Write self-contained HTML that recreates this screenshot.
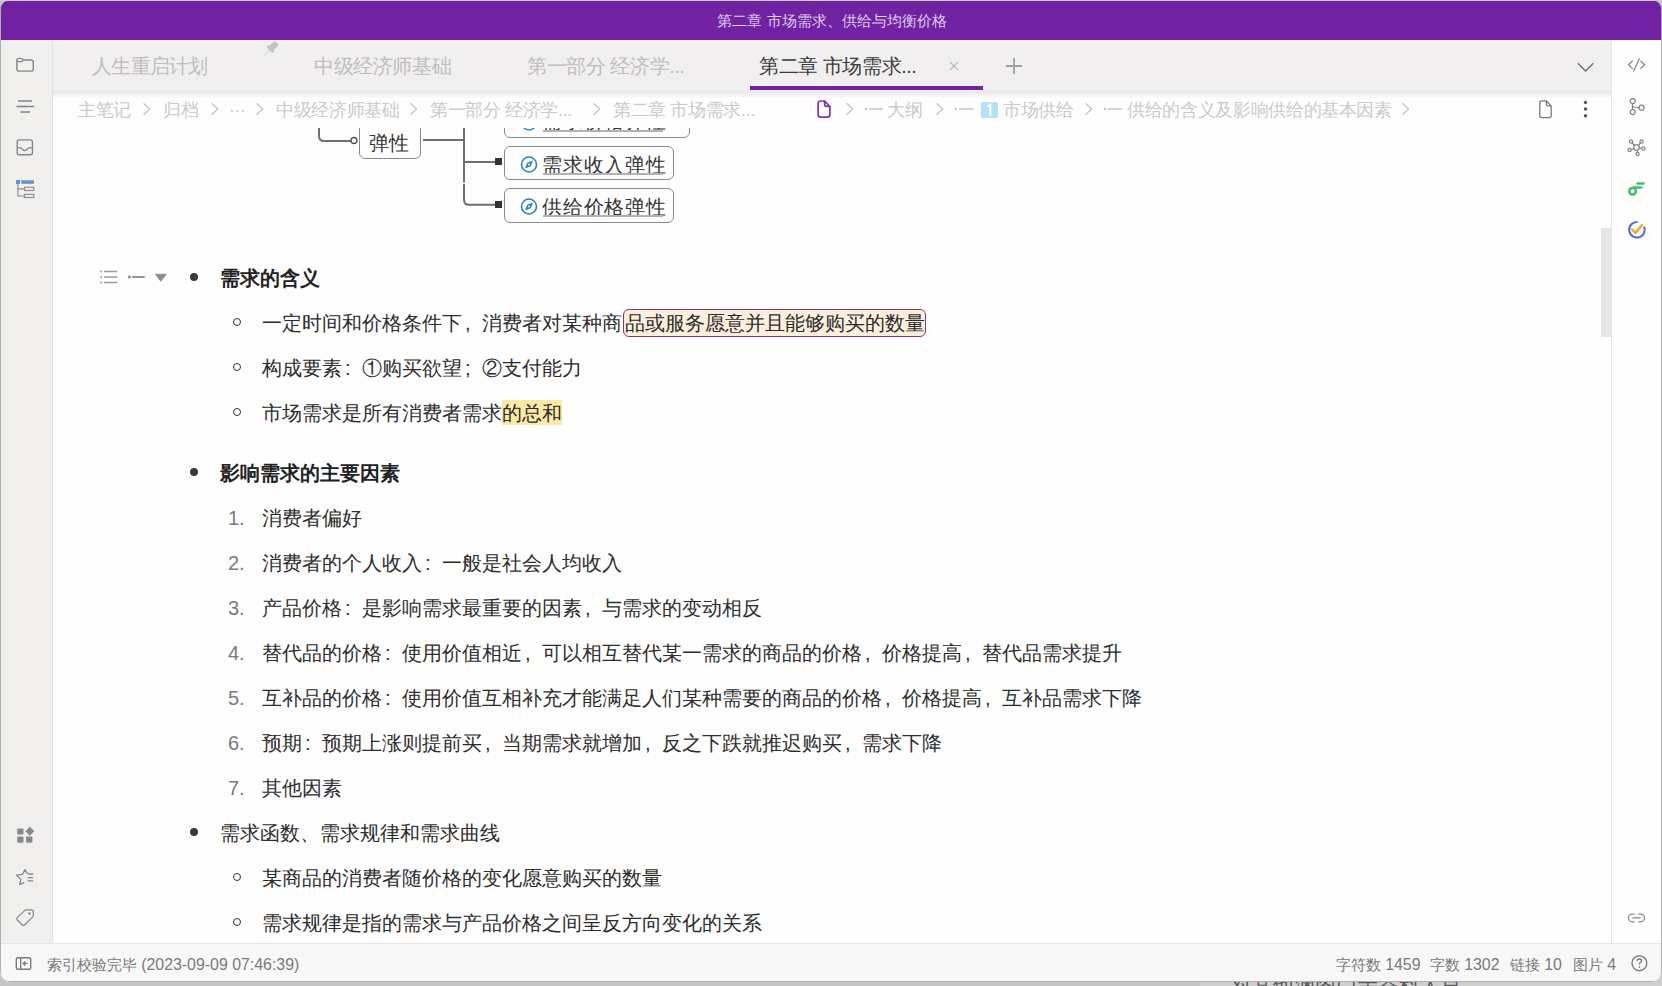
<!DOCTYPE html>
<html><head><meta charset="utf-8">
<style>
*{box-sizing:border-box}
html,body{margin:0;padding:0}
body{width:1662px;height:986px;overflow:hidden;position:relative;background:#c6c6c6;font-family:"Liberation Sans",sans-serif;color:#222}
#behind{position:absolute;left:1200px;top:978px;width:462px;height:8px;background:#cfcfcf}
#win{position:absolute;left:0;top:0;width:1662px;height:982px;border-radius:10px;overflow:hidden;background:#fefefe}
#frame{position:absolute;left:0;top:0;width:1662px;height:982px;border-radius:9px;border:1px solid #b0b0b0;border-top:none;pointer-events:none}
#title{position:absolute;left:0;top:0;width:1662px;height:40px;background:#7122a3;color:#ddcfec;font-size:15.2px;text-align:center;line-height:42px;padding-left:2px}
#ldock{position:absolute;left:0;top:40px;width:53px;height:904px;background:#f2f0ef;border-right:1px solid #e0e0dc}
#tabs{position:absolute;left:53px;top:40px;width:1558px;height:52px;background:#f1efef}
#tabshade{position:absolute;left:53px;top:91px;width:1558px;height:7px;background:linear-gradient(#e8e6e8,#fcfcfc)}
#rdock{position:absolute;left:1611px;top:40px;width:51px;height:904px;background:#fefefe;border-left:1px solid #e6e6e6}
#status{position:absolute;left:0;top:943px;width:1662px;height:39px;background:#f9f8f9;border-top:1px solid #e6e5e6}
.tab{position:absolute;top:54px;font-size:19.5px;letter-spacing:-0.4px;color:#c0bec0;line-height:24px}
.bc{position:absolute;top:98px;font-size:17.6px;letter-spacing:-0.35px;color:#cacaca;line-height:24px}
.txt{position:absolute;font-size:20px;line-height:24px;color:#2c2c2c;white-space:nowrap}
.b{font-weight:bold;color:#222}
.dot{position:absolute;width:8px;height:8px;border-radius:50%;background:#3a3a3a}
.circ{position:absolute;width:8px;height:8px;border-radius:50%;border:1.8px solid #333}
.num{position:absolute;font-size:20px;line-height:24px;color:#7a7a7a}
.st{position:absolute;top:953px;font-size:15px;line-height:24px;color:#7a7a7a;white-space:nowrap}
svg{position:absolute;overflow:visible}
.pc{font-style:normal;display:inline-block;width:20px;padding-left:3px;text-align:left}
.mm{position:absolute;border:1px solid #8a8a8a;border-radius:6px;background:#fefefe}
.mmt{position:absolute;font-size:20px;letter-spacing:0.75px;line-height:24px;color:#333;white-space:nowrap}
.ul{position:absolute;height:2px;background:#b2b2b2}
#clip{position:absolute;left:53px;top:128px;width:1558px;height:816px;overflow:hidden}
</style></head><body>
<div id="behind"></div>
<div style="position:absolute;left:1231px;top:970px;font-size:21px;line-height:30px;color:#5a5a5a;white-space:nowrap">对其他渊图门亲答料人肖</div>
<div id="win">
<div id="title">第二章 市场需求、供给与均衡价格</div>
<div id="ldock"></div>
<div id="tabs"></div>
<div id="tabshade"></div>
<div id="rdock"></div>
<div id="status"></div>

<!-- tabs -->
<div class="tab" style="left:92px;letter-spacing:-0.75px">人生重启计划</div>
<div class="tab" style="left:314px">中级经济师基础</div>
<div class="tab" style="left:527px">第一部分 经济学...</div>
<div class="tab" style="left:759px;color:#3c3c3c">第二章 市场需求...</div>
<div style="position:absolute;left:750px;top:86px;width:233px;height:3.5px;background:#7122a3"></div>
<svg style="left:0;top:0" width="1662" height="100">
 <!-- pin -->
 <g transform="translate(270.3,49.3) rotate(45)" fill="#c4c4c4"><rect x="-3" y="-9" width="6" height="8" rx="1"/><rect x="-4.3" y="-2" width="8.6" height="3.2" rx="1"/><rect x="-0.45" y="1" width="0.9" height="7.5" fill="#c8d2d2"/></g>
 <!-- close x -->
 <path d="M950 62 L958 70 M958 62 L950 70" stroke="#a8a8a8" stroke-width="1.05"/>
 <!-- plus -->
 <path d="M1014 58 V74 M1006 66 H1022" stroke="#a0a0a0" stroke-width="1.8"/>
 <!-- chevron -->
 <path d="M1577.8 63.3 L1585.6 71 L1593.3 63.3" stroke="#707070" stroke-width="1.35" fill="none"/>
</svg>

<!-- breadcrumb -->
<div class="bc" style="left:78px">主笔记</div>
<div class="bc" style="left:163px">归档</div>
<div class="bc" style="left:229px">···</div>
<div class="bc" style="left:276px">中级经济师基础</div>
<div class="bc" style="left:430px">第一部分 经济学...</div>
<div class="bc" style="left:613px">第二章 市场需求...</div>
<div class="bc" style="left:887px">大纲</div>
<div class="bc" style="left:1003px">市场供给</div>
<div class="bc" style="left:1127px">供给的含义及影响供给的基本因素</div>
<svg style="left:0;top:0" width="1662" height="130" fill="none">
 <g stroke="#c4c4c4" stroke-width="1.3">
  <path d="M143.5 103.3 L149.7 109 L143.5 114.7"/>
  <path d="M211.5 103.3 L217.7 109 L211.5 114.7"/>
  <path d="M256.5 103.3 L262.7 109 L256.5 114.7"/>
  <path d="M410.5 103.3 L416.7 109 L410.5 114.7"/>
  <path d="M593.5 103.3 L599.7 109 L593.5 114.7"/>
  <path d="M846.5 103.3 L852.7 109 L846.5 114.7"/>
  <path d="M936.5 103.3 L942.7 109 L936.5 114.7"/>
  <path d="M1085.5 103.3 L1091.7 109 L1085.5 114.7"/>
  <path d="M1402.5 103.3 L1408.7 109 L1402.5 114.7"/>
 </g>
 <!-- doc purple -->
 <path d="M820.4 101 H824.6 L829.85 106.3 V114.8 Q829.85 117.05 827.6 117.05 H820.4 Q818.15 117.05 818.15 114.8 V103.25 Q818.15 101 820.4 101 Z M824.6 101.2 V104.3 Q824.6 106.3 826.6 106.3 H829.7" stroke="#7d32b9" stroke-width="1.7"/>
 <!-- outline dash icons -->
 <g stroke="#c8c8c8" stroke-width="1.6"><path d="M869 109 H883"/><path d="M959 109 H973"/><path d="M1108 109 H1122"/></g>
 <g fill="#c8c8c8"><circle cx="866" cy="109" r="1.3"/><circle cx="956" cy="109" r="1.3"/><circle cx="1105" cy="109" r="1.3"/></g>
 <rect x="981" y="102" width="17" height="16" rx="2" fill="#b5e0f6"/>
 <path d="M987.5 106.8 L990.3 104.8 V115.5" stroke="#fff" stroke-width="2"/>
 <!-- right doc -->
 <path d="M1542 100.8 H1546.3 L1551.2 106 V115.5 Q1551.2 117.6 1549.1 117.6 H1542 Q1539.8 117.6 1539.8 115.5 V103 Q1539.8 100.8 1542 100.8 Z M1546.3 101 V104.3 Q1546.3 105.8 1547.8 105.8 H1551" stroke="#7a7a7a" stroke-width="1.3"/>
 <g fill="#555"><circle cx="1585.5" cy="102.4" r="1.7"/><circle cx="1585.5" cy="109" r="1.7"/><circle cx="1585.5" cy="115.7" r="1.7"/></g>
</svg>

<!-- content clip -->
<div id="clip">
 <div style="position:absolute;left:-53px;top:-128px;width:1662px;height:986px">
 <!-- mindmap -->
 <svg style="left:0;top:0" width="800" height="240" fill="none">
  <path d="M319 120 V136 Q319 141 324 141 H351" stroke="#6e6e6e" stroke-width="2"/>
  <circle cx="354" cy="140.5" r="3" stroke="#555" stroke-width="1.4" fill="#fff"/>
  <path d="M423 140 H464" stroke="#6e6e6e" stroke-width="2"/>
  <path d="M464 120 V182.6 M464 184 V199.5 Q464 204.8 469 204.8 H497" stroke="#6e6e6e" stroke-width="2"/>
  <path d="M464 162 H497" stroke="#6e6e6e" stroke-width="2"/>
  <rect x="495" y="158" width="7" height="7" fill="#333"/>
  <rect x="495" y="201" width="7" height="7" fill="#333"/>
 </svg>
 <div class="mm" style="left:359px;top:110px;width:62px;height:49px"></div>
 <div class="txt" style="left:369px;top:131px;font-size:19.5px;color:#333">弹性</div>
 <div class="mm" style="left:504px;top:100px;width:186px;height:38px"></div>
 <div class="mmt" style="left:542px;top:109px">需求价格弹性</div><div class="ul" style="left:543px;top:130px;width:120px"></div>
 <div class="mm" style="left:504px;top:146px;width:170px;height:34px"></div>
 <div class="mmt" style="left:542px;top:153px">需求收入弹性</div><div class="ul" style="left:543px;top:173px;width:120px"></div>
 <div class="mm" style="left:504px;top:188px;width:170px;height:35px"></div>
 <div class="mmt" style="left:542px;top:195px">供给价格弹性</div><div class="ul" style="left:543px;top:215px;width:120px"></div>
 <svg style="left:0;top:0" width="800" height="240" fill="none">
  <g stroke="#2f7fc6" stroke-width="1.6">
   <circle cx="529" cy="122.5" r="7.5"/>
   <circle cx="529" cy="164.5" r="7.5"/>
   <circle cx="529" cy="206.5" r="7.5"/>
  </g>
  <g fill="#2f7fc6">
   <path d="M533 160.5 L530.8 166.2 L525 168.5 L527.2 162.8 Z"/>
   <path d="M533 202.5 L530.8 208.2 L525 210.5 L527.2 204.8 Z"/>
  </g>
  <g fill="#fff"><circle cx="529" cy="164.5" r="0.9"/><circle cx="529" cy="206.5" r="0.9"/></g>
 </svg>

 <!-- gutter icons -->
 <svg style="left:0;top:0" width="200" height="300" fill="none">
  <g stroke="#9a9a9a" stroke-width="1.5">
   <path d="M104 271.6 H117.3 M104 277 H117.3 M104 282.6 H117.3"/>
  </g>
  <g fill="#9a9a9a"><circle cx="101.2" cy="271.6" r="1"/><circle cx="101.2" cy="277" r="1"/><circle cx="101.2" cy="282.6" r="1"/></g>
  <path d="M132.2 277 H144.8" stroke="#8a8a8a" stroke-width="1.8"/>
  <circle cx="129.4" cy="277" r="1.5" fill="#8a8a8a"/>
  <path d="M155.5 274.3 H166.2 L160.8 281.2 Z" fill="#8e8e8e" stroke="#8e8e8e" stroke-width="1" stroke-linejoin="round"/>
 </svg>

 <div class="dot" style="left:190px;top:273px"></div>
 <div class="txt b" style="left:220px;top:266px">需求的含义</div>
 <div class="circ" style="left:233px;top:318px"></div>
 <div class="txt" style="left:262px;top:311px">一定时间和价格条件下<i class="pc">,</i>消费者对某种商<span style="background:#fcefdc;border:1px solid #8e3470;border-radius:6px;padding:2px 0 2px 1px;margin-left:1px">品或服务愿意并且能够购买的数量</span></div>
 <div class="circ" style="left:233px;top:363px"></div>
 <div class="txt" style="left:262px;top:356px">构成要素<i class="pc">:</i>①购买欲望<i class="pc">;</i>②支付能力</div>
 <div class="circ" style="left:233px;top:408px"></div>
 <div class="txt" style="left:262px;top:401px">市场需求是所有消费者需求<span style="background:#fde9a6;padding:2px 0 1px 0">的总和</span></div>

 <div class="dot" style="left:190px;top:468px"></div>
 <div class="txt b" style="left:220px;top:461px">影响需求的主要因素</div>
 <div class="num" style="left:228px;top:506px">1.</div>
 <div class="txt" style="left:262px;top:506px">消费者偏好</div>
 <div class="num" style="left:228px;top:551px">2.</div>
 <div class="txt" style="left:262px;top:551px">消费者的个人收入<i class="pc">:</i>一般是社会人均收入</div>
 <div class="num" style="left:228px;top:596px">3.</div>
 <div class="txt" style="left:262px;top:596px">产品价格<i class="pc">:</i>是影响需求最重要的因素<i class="pc">,</i>与需求的变动相反</div>
 <div class="num" style="left:228px;top:641px">4.</div>
 <div class="txt" style="left:262px;top:641px">替代品的价格<i class="pc">:</i>使用价值相近<i class="pc">,</i>可以相互替代某一需求的商品的价格<i class="pc">,</i>价格提高<i class="pc">,</i>替代品需求提升</div>
 <div class="num" style="left:228px;top:686px">5.</div>
 <div class="txt" style="left:262px;top:686px">互补品的价格<i class="pc">:</i>使用价值互相补充才能满足人们某种需要的商品的价格<i class="pc">,</i>价格提高<i class="pc">,</i>互补品需求下降</div>
 <div class="num" style="left:228px;top:731px">6.</div>
 <div class="txt" style="left:262px;top:731px">预期<i class="pc">:</i>预期上涨则提前买<i class="pc">,</i>当期需求就增加<i class="pc">,</i>反之下跌就推迟购买<i class="pc">,</i>需求下降</div>
 <div class="num" style="left:228px;top:776px">7.</div>
 <div class="txt" style="left:262px;top:776px">其他因素</div>

 <div class="dot" style="left:190px;top:828px"></div>
 <div class="txt" style="left:220px;top:821px">需求函数、需求规律和需求曲线</div>
 <div class="circ" style="left:233px;top:873px"></div>
 <div class="txt" style="left:262px;top:866px">某商品的消费者随价格的变化愿意购买的数量</div>
 <div class="circ" style="left:233px;top:918px"></div>
 <div class="txt" style="left:262px;top:911px">需求规律是指的需求与产品价格之间呈反方向变化的关系</div>
 </div>
</div>
<!-- scrollbar -->
<div style="position:absolute;left:1601px;top:228px;width:10px;height:109px;background:#e5e5e5"></div>

<!-- left dock icons -->
<svg style="left:0;top:0" width="53" height="944" fill="none">
 <g stroke="#848484" stroke-width="1.35">
  <path d="M16.85 60.5 Q16.85 58.35 19 58.35 H20.6 Q22.1 58.35 22.9 59.95 H31.1 Q33.25 59.95 33.25 62.1 V69 Q33.25 71.15 31.1 71.15 H19 Q16.85 71.15 16.85 69 Z M16.85 61.6 H21.2 Q22.4 61.6 22.9 59.95"/>
  <path d="M18 101 H32 M16.5 106.5 H34 M20.5 112 H30"/>
  <path d="M19.5 139.85 H30.2 Q32.45 139.85 32.45 142.1 V152.5 Q32.45 154.75 30.2 154.75 H19.5 Q17.2 154.75 17.2 152.5 V142.1 Q17.2 139.85 19.5 139.85 Z M17.2 147.8 H20.5 Q21.5 147.8 22 148.8 Q23 150.6 24.85 150.6 Q26.7 150.6 27.7 148.8 Q28.2 147.8 29.2 147.8 H32.45"/>
 </g>
 <rect x="16" y="180" width="4" height="4" fill="#4a9ee0"/>
 <rect x="21.5" y="180.6" width="12.2" height="3" fill="#4f96d4" stroke="#8a9aa8" stroke-width="0.6"/>
 <g stroke="#909090" stroke-width="1.2">
  <path d="M17.9 184 V196 H24.5 M17.9 188.8 H24.5"/>
  <rect x="24.5" y="187.3" width="9.3" height="3.2"/>
  <rect x="24.5" y="194.3" width="9.3" height="3.2"/>
 </g>
 <g fill="#8a8a8a">
  <rect x="17.2" y="828.4" width="6.3" height="6.2" rx="1"/>
  <rect x="17.2" y="836.6" width="6.3" height="6.2" rx="1"/>
  <rect x="26.1" y="836.6" width="6.3" height="6.2" rx="1"/>
  <path d="M29.8 827 L34 831.2 L29.8 835.4 L25.6 831.2 Z" stroke="#8a8a8a" stroke-width="0.6" stroke-linejoin="round"/>
 </g>
 <g stroke="#8a8a8a" stroke-width="1.3" stroke-linejoin="round">
  <path d="M28.5 873.5 L27 873.3 L25 869.6 L22.6 874.3 L16.6 875.2 L21 879.4 L19.6 884.6 L24.2 882.3"/>
  <path d="M28.4 874 H33.2 M27.6 877.6 H33.2 M27.6 880.9 H33.2"/>
  <path d="M25.8 909.8 H31.4 Q33.3 909.8 33.3 911.7 V915.4 Q33.3 916.3 32.7 916.9 L24.8 924.7 Q23.4 926.1 22 924.7 L17.5 920.2 Q16.1 918.8 17.5 917.4 L25.1 910.1 Q25.4 909.8 25.8 909.8 Z"/>
 </g>
 <circle cx="29.5" cy="913.5" r="1.3" fill="#8a8a8a"/>
</svg>

<!-- right dock icons -->
<svg style="left:0;top:0" width="1662" height="944" fill="none">
 <g stroke="#868686" stroke-width="1.25">
  <path d="M1632.7 60.7 L1628.6 64.75 L1632.7 68.8 M1640.5 60.7 L1644.6 64.75 L1640.5 68.8 M1639.5 58.6 L1633.5 71.3"/>
  <circle cx="1632.7" cy="101" r="2.5"/><circle cx="1632.7" cy="112" r="2.5"/><circle cx="1641.5" cy="107.7" r="2.5"/>
  <path d="M1632.5 103.5 V109.5 M1632.5 106 Q1633.5 107.5 1639 107.5"/>
  <circle cx="1636.5" cy="147.5" r="2.8"/>
  <circle cx="1631" cy="141.5" r="1.6"/><circle cx="1641.5" cy="141.5" r="1.6"/><circle cx="1629.5" cy="150" r="1.6"/><circle cx="1643.5" cy="148.5" r="1.6"/><circle cx="1637.5" cy="154" r="1.6"/>
  <path d="M1632 142.5 L1634.5 145.5 M1640.5 142.5 L1638.5 145.5 M1631 149.5 L1634 148.5 M1642 148.3 L1639.3 147.8 M1637.2 150.3 L1637.4 152.4"/>
  <path d="M1634.6 914 H1632.3 A3.9 3.9 0 0 0 1632.3 921.8 H1634.6 M1638.4 914 H1640.6 A3.9 3.9 0 0 1 1640.6 921.8 H1638.4 M1632.3 917.9 H1640.7"/>
 </g>
 <g stroke="#3fbf68" stroke-width="2.5" stroke-linecap="round">
  <path d="M1637.5 183.5 H1643.5"/>
  <path d="M1634 187.6 H1641.3"/>
  <circle cx="1632.6" cy="191.2" r="3.3" fill="none"/>
 </g>
 <path d="M1644 226.5 A7.8 7.8 0 1 1 1637.5 222" stroke="#4d6ed8" stroke-width="2"/>
 <path d="M1632 229.5 L1635.5 233 L1642 225" stroke="#f5a623" stroke-width="2.4" stroke-linecap="round" stroke-linejoin="round"/>
</svg>

<!-- status -->
<svg style="left:0;top:0" width="1662" height="981" fill="none">
 <g stroke="#7a7a7a" stroke-width="1.4">
  <rect x="16.3" y="957.7" width="14.4" height="11.6" rx="1.8"/>
  <path d="M20.7 957.7 V969.3 M27.6 963.4 H23.4 M25.3 961.4 L23.3 963.4 L25.3 965.4"/>
  <circle cx="1639.4" cy="963.3" r="7.4"/>
 </g>
 <path d="M1637.2 961 Q1637.2 959 1639.4 959 Q1641.6 959 1641.6 960.8 Q1641.6 962 1640.1 962.7 Q1639.4 963.2 1639.4 964.7" stroke="#7a7a7a" stroke-width="1.3"/>
 <circle cx="1639.4" cy="967.1" r="0.9" fill="#7a7a7a"/>
</svg>
<div class="st" style="left:47px">索引校验完毕 <span style="font-size:15.9px">(2023-09-09 07:46:39)</span></div>
<div class="st" style="left:1336px">字符数 <span style="font-size:15.9px">1459</span></div>
<div class="st" style="left:1430px">字数 <span style="font-size:15.9px">1302</span></div>
<div class="st" style="left:1510px">链接 <span style="font-size:15.9px">10</span></div>
<div class="st" style="left:1573px">图片 <span style="font-size:15.9px">4</span></div>
<div id="frame"></div>
</div>
<div style="position:absolute;left:0;top:0;width:1662px;height:1px;background:#c9cec6"></div>
</body></html>
